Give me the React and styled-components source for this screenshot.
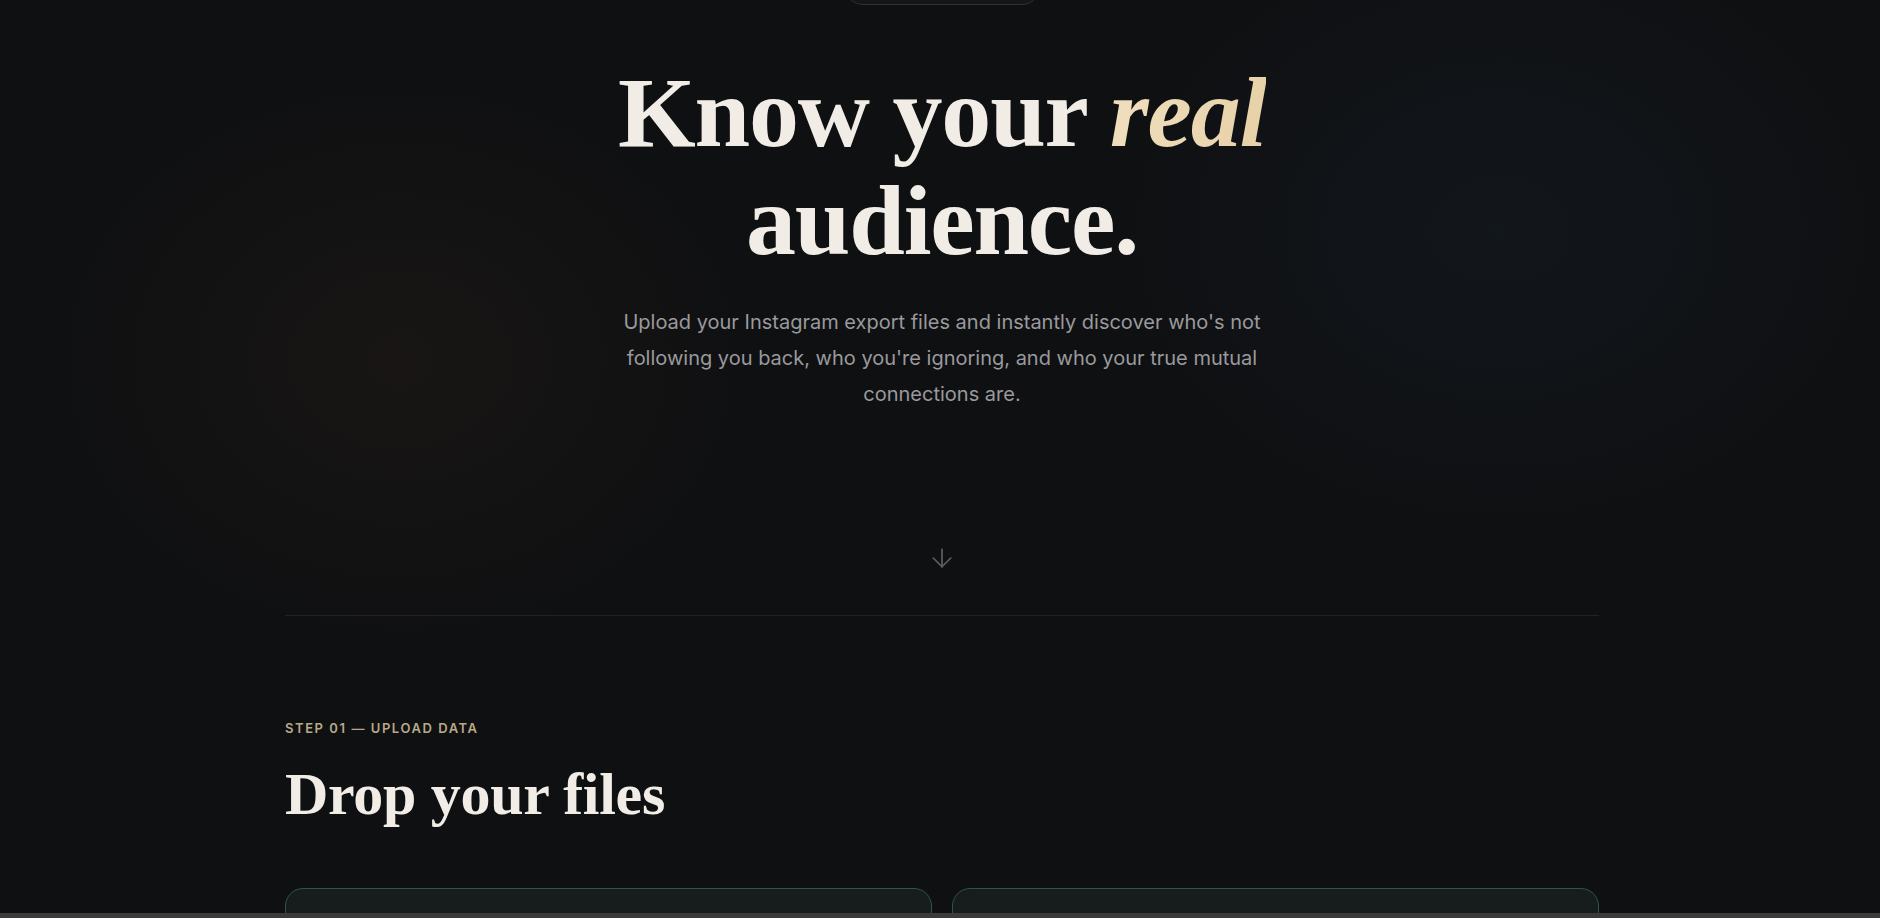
import React from 'react';
import styled, { createGlobalStyle } from 'styled-components';
import { ArrowDown } from 'lucide-react';

const GlobalStyle = createGlobalStyle`
  html, body {
    margin: 0;
    padding: 0;
    height: 100%;
    overflow: hidden;
    background: #0f1012;
  }
  * {
    box-sizing: border-box;
  }
`;

const Page = styled.div`
  min-height: 100vh;
  overflow: hidden;
  font-family: Inter, 'Liberation Sans', sans-serif;
  color: #f1ede6;
  background:
    radial-gradient(ellipse 520px 420px at 400px 360px, rgba(58, 42, 28, 0.22), transparent 70%),
    radial-gradient(ellipse 560px 440px at 1500px 230px, rgba(26, 40, 54, 0.28), transparent 70%),
    #0f1012;
`;

const Container = styled.div`
  width: 1314px;
  margin-left: calc(50% - 655px);
`;

const Hero = styled.header`
  display: flex;
  flex-direction: column;
  align-items: center;
  text-align: center;
`;

const Pill = styled.div`
  width: 195px;
  height: 36px;
  margin-top: -31px;
  border: 1px solid #303034;
  border-radius: 999px;
  background: #16161a;
`;

const Title = styled.h1`
  margin: 54px 0 0;
  font-family: 'Liberation Serif', 'DejaVu Serif', serif;
  font-weight: 700;
  font-size: 100px;
  line-height: 108px;
  letter-spacing: -0.012em;
  color: #f1ede6;
`;

const Accent = styled.em`
  font-style: italic;
  background: linear-gradient(100deg, #f0dfbf 0%, #e6d0a6 100%);
  -webkit-background-clip: text;
  background-clip: text;
  color: transparent;
`;

const Lead = styled.p`
  margin: 29px 0 0;
  max-width: 700px;
  font-size: 20px;
  line-height: 36px;
  font-weight: 400;
  color: #9a999d;
`;

const ScrollHint = styled.div`
  display: flex;
  justify-content: center;
  margin-top: 131px;
  color: #5d5d63;
`;

const Divider = styled.hr`
  width: 100%;
  margin: 42px 0 0;
  border: none;
  border-top: 1px solid #222226;
`;

const Section = styled.section`
  padding-top: 102px;
`;

const StepLabel = styled.div`
  font-size: 13px;
  line-height: 20px;
  font-weight: 600;
  letter-spacing: 0.12em;
  text-transform: uppercase;
  color: #b8a98a;
`;

const SectionTitle = styled.h2`
  margin: 24px 0 0;
  font-family: 'Liberation Serif', 'DejaVu Serif', serif;
  font-weight: 700;
  font-size: 60px;
  line-height: 64px;
  letter-spacing: -0.005em;
  color: #f1ede6;
`;

const CardGrid = styled.div`
  display: grid;
  grid-template-columns: 1fr 1fr;
  gap: 20px;
  margin-top: 62px;
`;

const DropCard = styled.div`
  height: 220px;
  border: 1px solid #2d5644;
  border-radius: 18px;
  background: linear-gradient(180deg, #171d1c 0%, #141817 100%);
`;

const WindowEdge = styled.div`
  position: fixed;
  left: 0;
  right: 0;
  bottom: 0;
  height: 5px;
  background: #3b3b3b;
`;

const App = () => (
  <>
    <GlobalStyle />
    <Page>
      <Container>
        <Hero>
          <Pill />
          <Title>
            Know your <Accent>real</Accent>
            <br />
            audience.
          </Title>
          <Lead>
            Upload your Instagram export files and instantly discover who's not
            following you back, who you're ignoring, and who your true mutual
            connections are.
          </Lead>
          <ScrollHint>
            <ArrowDown size={30} strokeWidth={1.4} />
          </ScrollHint>
          <Divider />
        </Hero>
        <Section>
          <StepLabel>Step 01 — Upload data</StepLabel>
          <SectionTitle>Drop your files</SectionTitle>
          <CardGrid>
            <DropCard />
            <DropCard />
          </CardGrid>
        </Section>
      </Container>
      <WindowEdge />
    </Page>
  </>
);

export default App;
